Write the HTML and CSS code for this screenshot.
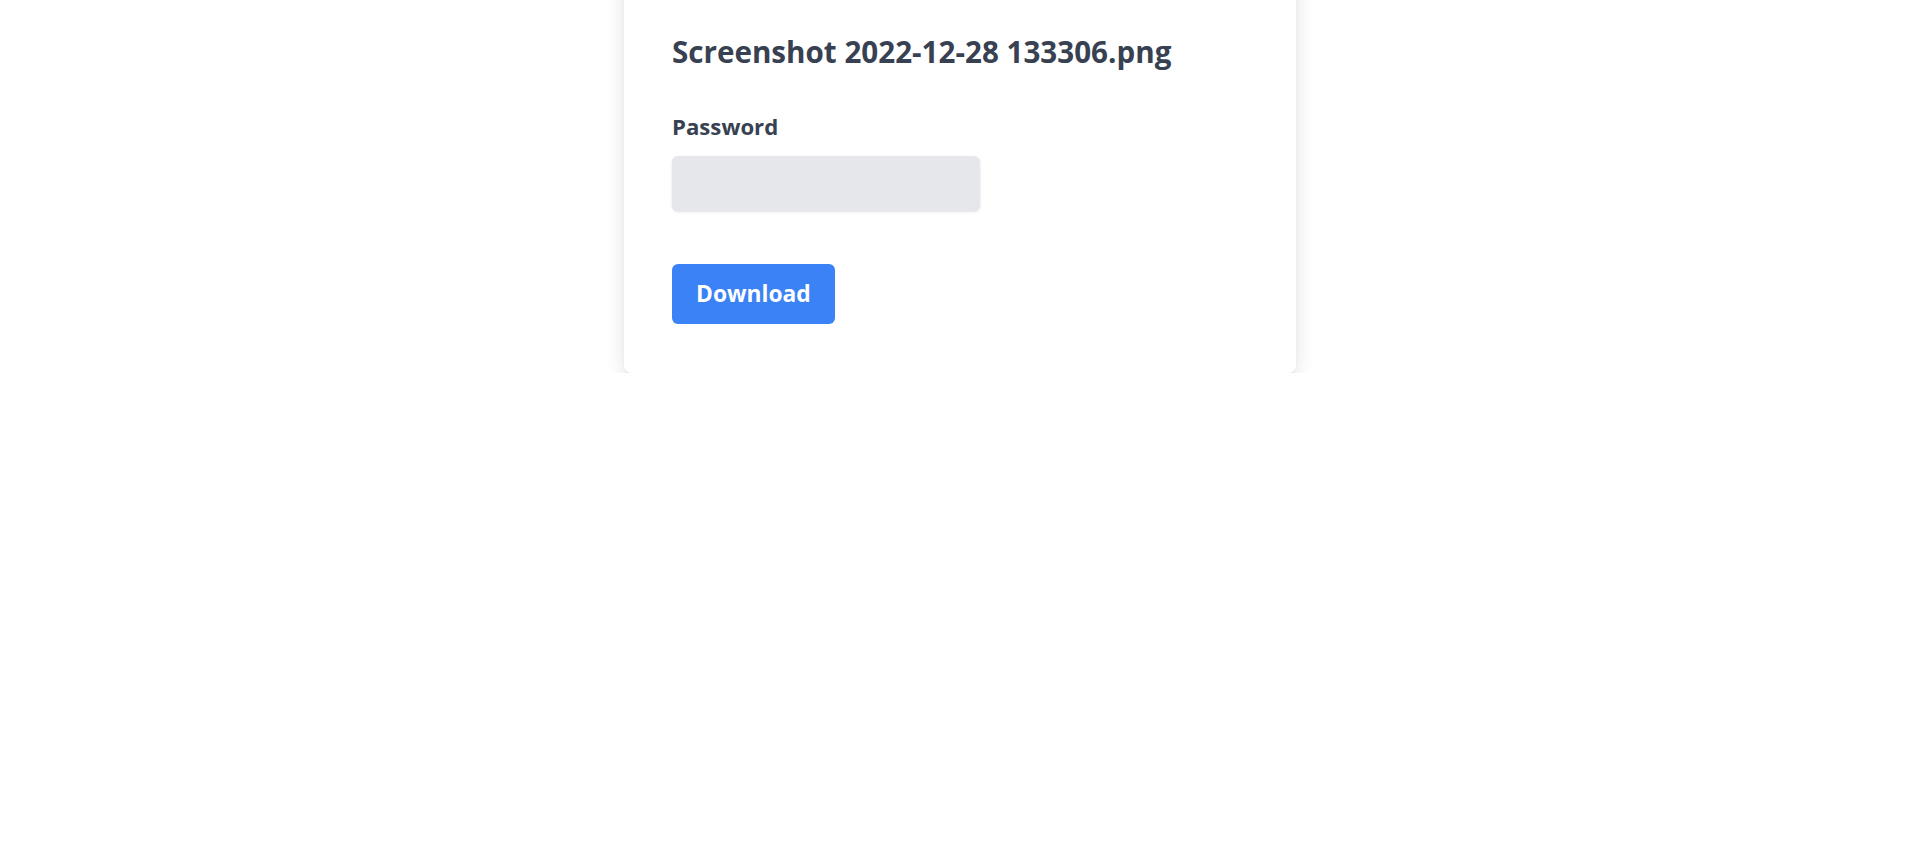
FILE: index.html
```html
<!DOCTYPE html>
<html lang="en">
<head>
<meta charset="utf-8">
<title>Download</title>
<link rel="stylesheet" href="styles.css">
</head>
<body>
<main class="card">
  <h1 class="title">Screenshot 2022-12-28 133306.png</h1>
  <form class="form">
    <label class="label" for="pw">Password</label>
    <input class="input" id="pw" type="password">
    <button class="btn" type="button">Download</button>
  </form>
</main>
</body>
</html>
```
FILE: styles.css
```css
html, body {
  margin: 0;
  padding: 0;
  background: #ffffff;
}
body {
  font-family: "Open Sans", "Noto Sans", "Liberation Sans", sans-serif;
  color: #374151;
}
.card {
  width: 672px;
  box-sizing: border-box;
  margin: -40px auto 0;
  padding: 74px 48px 49px;
  background: #ffffff;
  border-radius: 8px;
  box-shadow: 0 20px 25px -5px rgba(0,0,0,0.1), 0 8px 10px -6px rgba(0,0,0,0.1), 0 0 24px rgba(0,0,0,0.06);
}
.title {
  margin: 0;
  font-size: 29.6px;
  line-height: 36px;
  font-weight: 700;
  color: #374151;
}
.form {
  display: flex;
  flex-direction: column;
  align-items: flex-start;
  margin-top: 41px;
}
.label {
  font-size: 22.2px;
  line-height: 32px;
  font-weight: 700;
  color: #374151;
}
.input {
  margin-top: 13px;
  width: 308px;
  height: 55px;
  box-sizing: border-box;
  border: none;
  border-radius: 6px;
  background: #e5e7eb;
  box-shadow: 0 1px 3px rgba(0,0,0,0.1), 0 1px 2px -1px rgba(0,0,0,0.1);
  padding: 0 12px;
  font: inherit;
}
.btn {
  margin-top: 53px;
  height: 60px;
  box-sizing: border-box;
  padding: 14px 24px;
  border: none;
  border-radius: 6px;
  background: #3b82f6;
  color: #ffffff;
  font-family: inherit;
  font-size: 22.8px;
  line-height: 32px;
  font-weight: 700;
}
```
